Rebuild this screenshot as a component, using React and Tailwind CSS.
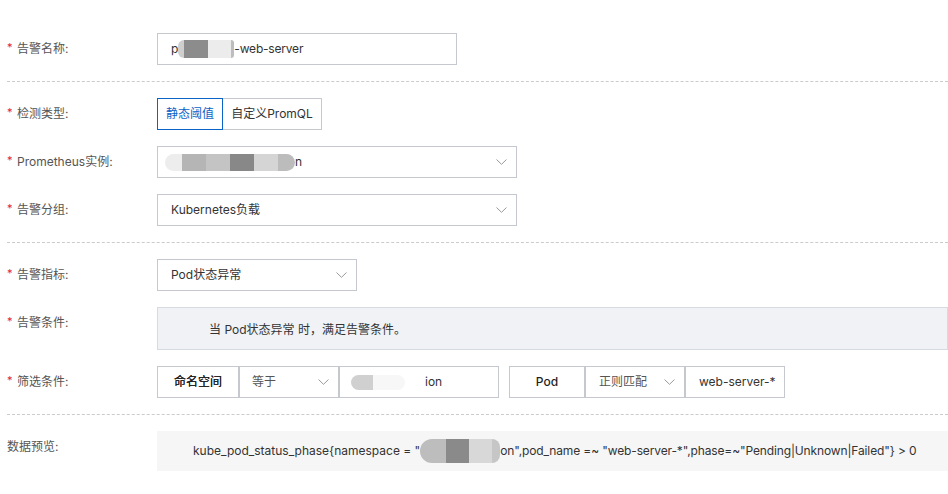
import React from "react";

function Chevron() {
  return (
    <svg width="11" height="6" viewBox="0 0 11 6" fill="none" className="shrink-0">
      <path d="M0.5 0.5 L5.5 5.3 L10.5 0.5" stroke="#9a9a9a" strokeWidth="1" />
    </svg>
  );
}

function Label({ children, required = true }) {
  return (
    <div className="w-[150px] h-8 flex items-center shrink-0 text-[#555]">
      {required && (
        <span className="w-[10px] text-[#e4262c] text-[11px] leading-none -mt-[3px]">*</span>
      )}
      <span>{children}</span>
    </div>
  );
}

function Row({ label, required, children }) {
  return (
    <div className="flex items-start">
      <Label required={required}>{label}</Label>
      {children}
    </div>
  );
}

function Select({ width, children, pl = "pl-[13px]" }) {
  return (
    <div
      className={`${width} ${pl} h-8 border border-[#c5c8ce] bg-white flex items-center justify-between pr-[9px]`}
    >
      <div className="flex items-center">{children}</div>
      <Chevron />
    </div>
  );
}

// masked segment of a redacted value
function Mask({ parts, h = "h-[18px]" }) {
  return (
    <span className={`inline-flex ${h} items-stretch blur-[0.6px]`}>
      {parts.map(([w, c], i) => (
        <span
          key={i}
          className={`${i === 0 ? "rounded-l-full" : ""} ${
            i === parts.length - 1 ? "rounded-r-full" : ""
          }`}
          style={{ width: w, background: c }}
        />
      ))}
    </span>
  );
}

export default function App() {
  return (
    <div className="w-[948px] h-[494px] overflow-hidden bg-white pl-[7px] pt-[33px] text-[12px] text-[#333] font-['Inter','Noto_Sans_CJK_SC',sans-serif]">
      {/* basic info */}
      <section className="pb-4 border-b border-dashed border-[#cbcbcb]">
        <Row label="告警名称:">
          <div className="w-[300px] h-8 border border-[#c5c8ce] bg-white flex items-center pl-[13px]">
            <span>p</span>
            <Mask
              parts={[
                [6, "#cfcfcf"],
                [24, "#8c8c8c"],
                [23, "#ececec"],
                [3, "#bdbdbd"],
              ]}
            />
            <span className="tracking-[-0.2px]">-web-server</span>
          </div>
        </Row>
      </section>

      {/* detection settings */}
      <section className="py-4 border-b border-dashed border-[#cbcbcb] flex flex-col gap-4">
        <Row label="检测类型:">
          <div className="flex h-8">
            <button className="w-[66px] h-8 border border-[#0a64c8] text-[#0a64c8] bg-white flex items-center justify-center">
              静态阈值
            </button>
            <button className="w-[99px] h-8 border border-l-0 border-[#c5c8ce] text-[#333] bg-white flex items-center justify-center">
              自定义PromQL
            </button>
          </div>
        </Row>
        <Row label="Prometheus实例:">
          <Select width="w-[360px]" pl="pl-[7px]">
            <Mask
              h="h-[17px]"
              parts={[
                [17, "#ededed"],
                [24, "#b5b5b5"],
                [24, "#c4c4c4"],
                [24, "#888888"],
                [24, "#d5d5d5"],
                [17, "#bcbcbc"],
              ]}
            />
            <span>n</span>
          </Select>
        </Row>
        <Row label="告警分组:">
          <Select width="w-[360px]">
            <span>Kubernetes负载</span>
          </Select>
        </Row>
      </section>

      {/* rule */}
      <section className="py-4 border-b border-dashed border-[#cbcbcb] flex flex-col gap-4">
        <Row label="告警指标:">
          <Select width="w-[200px]">
            <span>Pod状态异常</span>
          </Select>
        </Row>
        <Row label="告警条件:">
          <div className="flex-1 h-[43px] border border-[#d6dae1] bg-[#f0f2f6] flex items-center pl-[51px] pt-[2px]">
            当 Pod状态异常 时，满足告警条件。
          </div>
        </Row>
        <Row label="筛选条件:">
          <div className="flex h-8">
            <div className="w-[82px] h-8 border border-[#c5c8ce] flex items-center justify-center text-[#1f1f1f] [text-shadow:0_0_0.3px_#1f1f1f]">
              命名空间
            </div>
            <div className="w-[100px] h-8 border border-[#c5c8ce] flex items-center justify-between pl-[12px] pr-[9px] text-[#555]">
              <span>等于</span>
              <Chevron />
            </div>
            <div className="w-[160px] h-8 border border-[#c5c8ce] flex items-center pl-[11px]">
              <Mask
                h="h-[15px]"
                parts={[
                  [22, "#d0d0d0"],
                  [32, "#f7f7f7"],
                ]}
              />
              <span className="ml-[20px]">ion</span>
            </div>
            <div className="w-[76px] h-8 ml-[10px] border border-[#c5c8ce] flex items-center justify-center font-medium text-[#1f1f1f]">
              Pod
            </div>
            <div className="w-[100px] h-8 border border-[#c5c8ce] flex items-center justify-between pl-[13px] pr-[9px] text-[#555]">
              <span>正则匹配</span>
              <Chevron />
            </div>
            <div className="w-[100px] h-8 border border-[#c5c8ce] flex items-center pl-[13px]">
              web-server-*
            </div>
          </div>
        </Row>
      </section>

      {/* preview */}
      <section className="pt-4">
        <Row label="数据预览:" required={false}>
          <div className="flex-1 h-10 bg-[#f6f6f6] flex items-center pl-[36px] whitespace-nowrap">
            <span>kube_pod_status_phase{"{"}namespace = "</span>
            <Mask
              h="h-[24px]"
              parts={[
                [26, "#bdbdbd"],
                [23, "#8a8a8a"],
                [23, "#d8d8d8"],
                [8, "#c6c6c6"],
              ]}
            />
            <span className="tracking-[-0.13px]">
              on",pod_name =~ "web-server-*",phase=~"Pending|Unknown|Failed"{"}"} &gt; 0
            </span>
          </div>
        </Row>
      </section>
    </div>
  );
}
